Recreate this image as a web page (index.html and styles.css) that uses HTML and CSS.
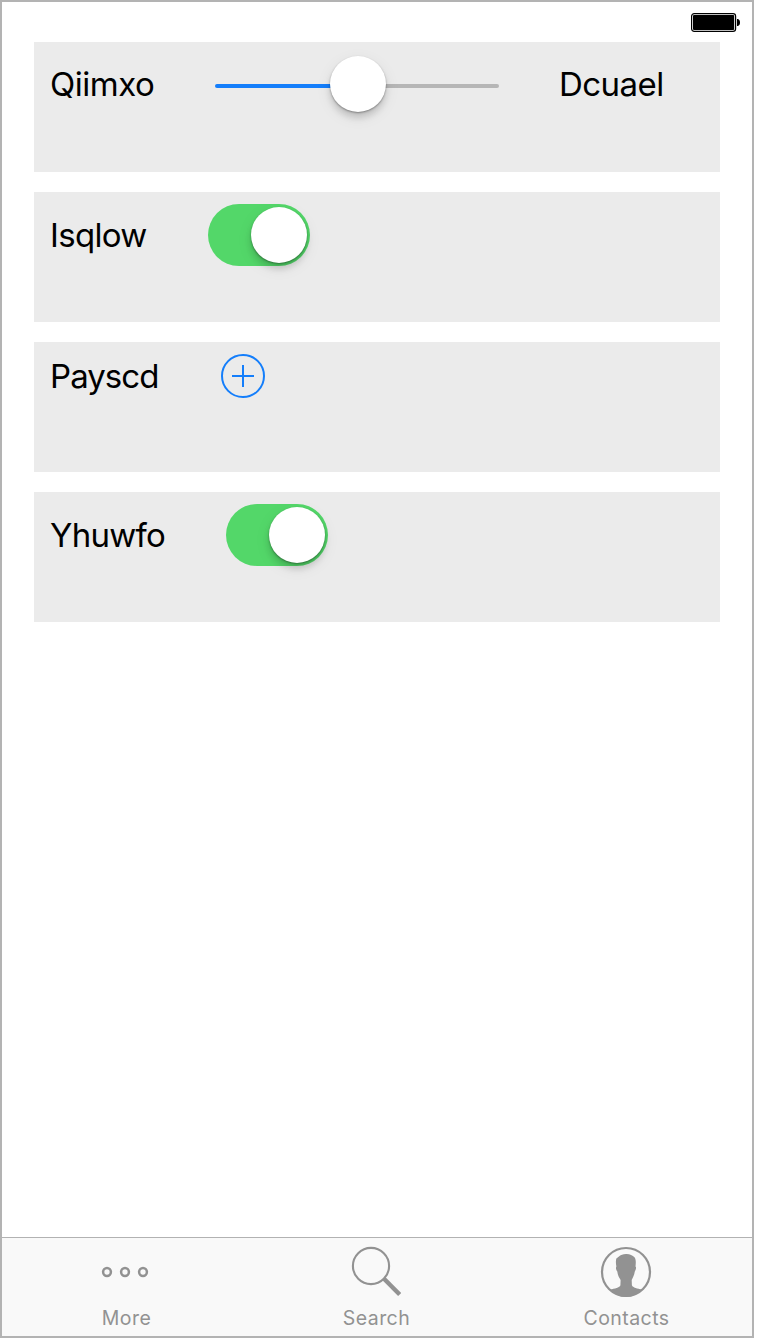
FILE: index.html
```html
<!DOCTYPE html>
<html lang="en">
<head>
<meta charset="utf-8">
<title>Settings</title>
<link rel="stylesheet" href="styles.css">
</head>
<body>
<div class="phone">
  <header class="status-bar">
    <svg class="battery" width="50" height="20" viewBox="0 0 50 20">
      <rect x="0.6" y="0.6" width="44" height="17.8" rx="2.6" fill="none" stroke="#000" stroke-width="1.2"/>
      <rect x="2" y="2" width="41.2" height="15" rx="1" fill="#000"/>
      <path d="M46 6h.8C48.4 6.4 49 7.800 49 9.500S48.400 12.600 46.800 13H46z" fill="#000"/>
    </svg>
  </header>
  <main class="cards">
    <section class="card">
      <div class="row row-slider">
        <span class="label label-qiimxo">Qiimxo</span>
        <div class="slider"><div class="track"></div><div class="thumb slider-thumb"></div></div>
        <span class="label label-dcuael">Dcuael</span>
      </div>
    </section>
    <section class="card">
      <div class="row row-isqlow">
        <span class="label label-isqlow">Isqlow</span>
        <div class="switch"><div class="thumb"></div></div>
      </div>
    </section>
    <section class="card">
      <div class="row row-payscd">
        <span class="label label-payscd">Payscd</span>
        <svg width="44" height="44" viewBox="0 0 44 44" fill="none" stroke="#147efb" stroke-width="2">
          <circle cx="22" cy="22" r="21"/>
          <path d="M22 11v22M11 22h22"/>
        </svg>
      </div>
    </section>
    <section class="card">
      <div class="row row-yhuwfo">
        <span class="label label-yhuwfo">Yhuwfo</span>
        <div class="switch"><div class="thumb"></div></div>
      </div>
    </section>
  </main>
  <nav class="tabs">
    <div class="tab">
      <svg width="50" height="52" viewBox="0 0 50 52" fill="none" stroke="#929292" stroke-width="2.500">
        <circle cx="6" cy="26" r="3.900"/><circle cx="24" cy="26" r="3.900"/><circle cx="42" cy="26" r="3.900"/>
      </svg>
      <span class="tab-label">More</span>
    </div>
    <div class="tab">
      <svg width="50" height="52" viewBox="0 0 50 52" fill="none" stroke="#929292">
        <circle cx="20" cy="20" r="18.100" stroke-width="2.100"/>
        <path d="M32.500 32.300L48.700 48.500" stroke-width="4.400"/>
      </svg>
      <span class="tab-label">Search</span>
    </div>
    <div class="tab">
      <svg width="52" height="52" viewBox="0 0 52 52">
        <circle cx="26" cy="26" r="24" fill="none" stroke="#929292" stroke-width="2.200"/>
        <path fill="#929292" d="M26 8C29.500 7.800 32.500 9.200 34.500 11.300C36 13.500 36 16 35.500 20.500C36.500 21 36.100 23.500 34.800 25.500C34.300 29.500 32.500 32 31.700 34L31.900 39.200C32.800 41.800 37.500 42.400 42 43.600C38 48.200 32 51 26 51S14 48.200 10.300 43.600C14.500 42.400 19.600 41.800 20.400 39.200L20.600 34C19 31.500 17.700 29 17.300 25.500C16 24 15.600 21.500 16.400 20.600C15.700 17 15.700 14 16.500 12.300C18.500 11.500 19.500 8.300 26 8Z"/>
      </svg>
      <span class="tab-label">Contacts</span>
    </div>
  </nav>
</div>
</body>
</html>
```

FILE: styles.css
```css
* { box-sizing: border-box; }
body {
  margin: 0;
  background: #fff;
  font-family: Inter, "Liberation Sans", sans-serif;
}
.phone {
  display: flex;
  flex-direction: column;
  width: 754px;
  height: 1338px;
  border: 2px solid #b3b3b3;
}
.status-bar {
  display: flex;
  justify-content: flex-end;
  height: 40px;
  padding: 11px 11px 0 0;
}
.cards {
  display: flex;
  flex: 1;
  flex-direction: column;
  gap: 20px;
  padding: 0 32px;
}
.card {
  height: 130px;
  padding: 12px 16px;
  background: #ebebeb;
}
.row {
  display: grid;
  align-items: center;
}
.row-slider { grid-template-columns: 165px 284px auto; height: 60px; }
.row-isqlow { grid-template-columns: 158px 102px; }
.row-payscd { grid-template-columns: 171px 44px; }
.row-yhuwfo { grid-template-columns: 176px 102px; }
.label {
  font-size: 33px;
  line-height: 40px;
  white-space: nowrap;
  color: #000;
}
.label-qiimxo { letter-spacing: -0.5px; }
.label-dcuael { padding-left: 60px; letter-spacing: -0.55px; }
.label-isqlow { letter-spacing: -0.7px; }
.label-payscd { letter-spacing: -0.95px; }
.label-yhuwfo { letter-spacing: -0.75px; }
.slider {
  display: grid;
  align-items: center;
  height: 60px;
}
.track, .slider-thumb { grid-area: 1 / 1; }
.track {
  height: 4px;
  margin-top: 4px;
  border-radius: 2px;
  background: linear-gradient(90deg, #147efb 50%, #b6b6b6 50%);
}
.thumb {
  width: 56px;
  height: 56px;
  border-radius: 50%;
  background: #fff;
  box-shadow: 0 6px 6px rgba(0,0,0,.13), 0 1px 2px rgba(0,0,0,.35), 0 5px 16px rgba(0,0,0,.08);
}
.slider-thumb { margin-left: 115px; }
.switch {
  display: flex;
  justify-content: flex-end;
  width: 102px;
  height: 62px;
  padding: 3px;
  border-radius: 31px;
  background: #53d769;
}
.tabs {
  display: grid;
  grid-template-columns: repeat(3, 250px);
  height: 99px;
  border-top: 1px solid #b2b2b2;
  background: #f9f9f9;
}
.tab {
  display: flex;
  flex-direction: column;
  align-items: center;
  padding: 8px 2px 0 0;
}
.tab-label {
  margin: 8px 0 0 1px;
  font-size: 19.5px;
  line-height: 24px;
  letter-spacing: 0.45px;
  color: #929292;
}
```
